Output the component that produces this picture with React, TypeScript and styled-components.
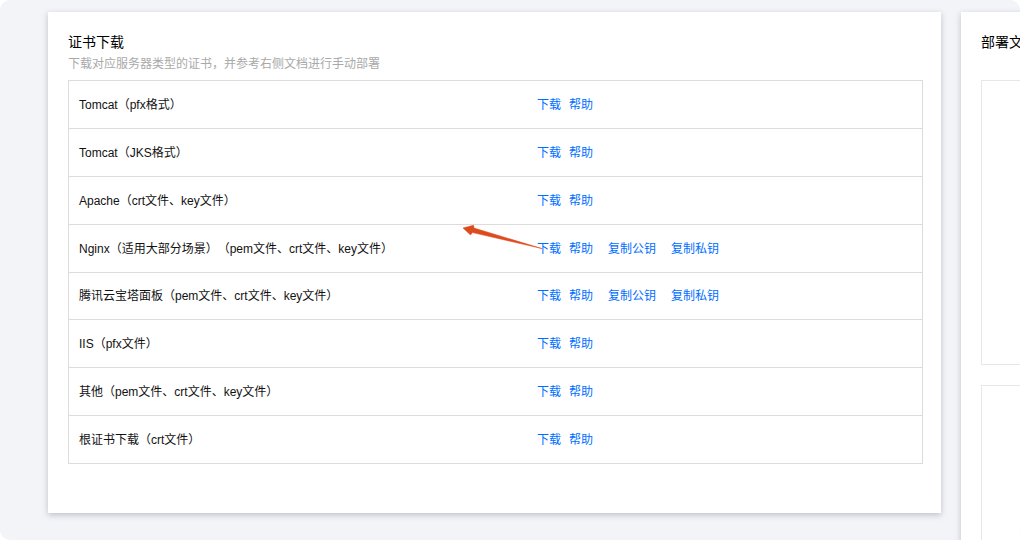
import React from "react";
import styled, { createGlobalStyle } from "styled-components";

const Global = createGlobalStyle`
  html, body { margin: 0; padding: 0; background: #fff; }
  body {
    font-family: "Liberation Sans", "Noto Sans CJK SC", sans-serif;
    overflow: hidden;
    text-spacing-trim: space-all;
  }
`;

const Viewport = styled.div`
  width: 1020px;
  height: 540px;
  overflow: hidden;
  background: #fff;
`;

const Canvas = styled.div`
  width: 1020px;
  height: 540px;
  box-sizing: border-box;
  background: #f3f4f8;
  border-radius: 10px;
  overflow: hidden;
  padding: 12px 0 0 48px;
  display: flex;
  align-items: flex-start;
  gap: 20px;
`;

const MainCard = styled.section`
  position: relative;
  flex: 0 0 893px;
  height: 501px;
  box-sizing: border-box;
  padding: 22px 18px 0 20px;
  background: #fff;
  box-shadow: 0 2px 6px rgba(54, 58, 80, 0.28);
`;

const SideCard = styled.section`
  flex: 0 0 500px;
  height: 600px;
  box-sizing: border-box;
  padding: 22px 20px 0;
  background: #fff;
  box-shadow: 0 2px 6px rgba(54, 58, 80, 0.28);
`;

const Title = styled.h2`
  margin: 0;
  font-size: 14px;
  line-height: 17px;
  font-weight: 400;
  color: #000;
`;

const Subtitle = styled.p`
  margin: 5px 0 0;
  font-size: 12px;
  line-height: 17px;
  color: #a9a9a9;
`;

const Table = styled.div`
  margin-top: 7px;
  border: 1px solid #dcdcdc;
  border-bottom: 0;
`;

const Row = styled.div`
  display: flex;
  align-items: center;
  height: 47.875px;
  box-sizing: border-box;
  padding-top: 2px;
  border-bottom: 1px solid #dcdcdc;
  font-size: 12px;
  line-height: 17px;
  color: #111;
`;

const NameCell = styled.div`
  flex: 0 0 468px;
  padding-left: 10px;
  box-sizing: border-box;
  white-space: nowrap;
`;

const Actions = styled.div`
  display: flex;
  align-items: center;
`;

const ActionLink = styled.a<{ $gap: number }>`
  margin-right: ${(p) => p.$gap}px;
  color: #006eff;
  cursor: pointer;
`;

const Arrow = styled.svg`
  position: absolute;
  left: 410px;
  top: 208px;
  width: 90px;
  height: 36px;
  pointer-events: none;
`;

const DocBox = styled.div<{ $h: number }>`
  height: ${(p) => p.$h}px;
  margin-bottom: 20px;
  border: 1px solid #e6e7ea;
  box-sizing: border-box;
`;

const SideBoxes = styled.div`
  margin-top: 29px;
`;

const rows: { name: string; keys?: boolean }[] = [
  { name: "Tomcat（pfx格式）" },
  { name: "Tomcat（JKS格式）" },
  { name: "Apache（crt文件、key文件）" },
  { name: "Nginx（适用大部分场景）（pem文件、crt文件、key文件）", keys: true },
  { name: "腾讯云宝塔面板（pem文件、crt文件、key文件）", keys: true },
  { name: "IIS（pfx文件）" },
  { name: "其他（pem文件、crt文件、key文件）" },
  { name: "根证书下载（crt文件）" },
];

export default function App() {
  return (
    <Viewport>
      <Global />
      <Canvas>
        <MainCard>
          <Title>证书下载</Title>
          <Subtitle>下载对应服务器类型的证书，并参考右侧文档进行手动部署</Subtitle>
          <Table>
            {rows.map((r) => (
              <Row key={r.name}>
                <NameCell>{r.name}</NameCell>
                <Actions>
                  <ActionLink $gap={8}>下载</ActionLink>
                  <ActionLink $gap={15}>帮助</ActionLink>
                  {r.keys && <ActionLink $gap={15}>复制公钥</ActionLink>}
                  {r.keys && <ActionLink $gap={0}>复制私钥</ActionLink>}
                </Actions>
              </Row>
            ))}
          </Table>
          <Arrow viewBox="0 0 90 36">
            <path d="M84 28.6 L16 8 L15.5 5.2 L5 8 L12.5 15 L14.5 12.6 Z" fill="#dd4a1c" stroke="#dd4a1c" strokeWidth="0.5" strokeLinejoin="round" />
          </Arrow>
        </MainCard>
        <SideCard>
          <Title>部署文档</Title>
          <SideBoxes>
            <DocBox $h={285} />
            <DocBox $h={285} />
          </SideBoxes>
        </SideCard>
      </Canvas>
    </Viewport>
  );
}
